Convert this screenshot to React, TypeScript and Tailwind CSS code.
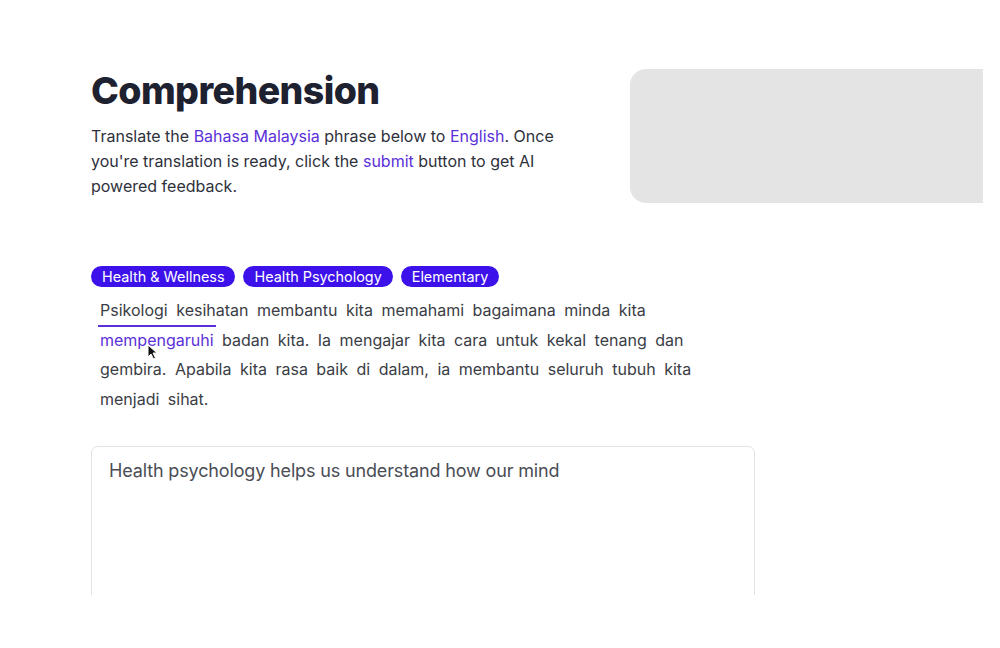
import React from "react";

const passage1 = ["Psikologi", "kesihatan", "membantu", "kita", "memahami", "bagaimana", "minda", "kita"];
const passage2 = ["badan", "kita.", "Ia", "mengajar", "kita", "cara", "untuk", "kekal", "tenang", "dan", "gembira.", "Apabila", "kita", "rasa", "baik", "di", "dalam,", "ia", "membantu", "seluruh", "tubuh", "kita", "menjadi", "sihat."];

function Word({ w, active }: { w: string; active?: boolean }) {
  return (
    <span
      className={
        active
          ? "px-[2px] pt-[3px] border-t-2 border-[#5b30d9] text-[#5b30d9]"
          : "px-[2px] pt-[3px] border-t-2 border-transparent"
      }
    >
      {w}
    </span>
  );
}

export default function App() {
  return (
    <div className="w-[1000px] h-[648px] bg-white" style={{ fontFamily: "Inter, 'Noto Sans', sans-serif" }}>
      <div className="relative w-[983px] h-[595px] overflow-hidden bg-white">
        <div className="flex pt-[69px] pl-[91px]">
          <div className="w-[480px] shrink-0">
            <h1 className="text-[37.5px] leading-[44px] font-extrabold tracking-[-0.6px] text-[#1e2130]">Comprehension</h1>
            <p className="mt-[11px] text-[16px] leading-[25px] text-[#2e313b]">
              Translate the <span className="text-[#5b30d9]">Bahasa Malaysia</span> phrase below to{" "}
              <span className="text-[#5b30d9]">English</span>. Once you're translation is ready, click the{" "}
              <span className="text-[#5b30d9]">submit</span> button to get AI powered feedback.
            </p>
          </div>
          <div className="ml-[59px] w-[420px] h-[134px] shrink-0 rounded-[16px] bg-[#e4e4e4]" />
        </div>

        <div className="pl-[91px] mt-[63px]">
          <div className="flex gap-[8px]">
            {["Health & Wellness", "Health Psychology", "Elementary"].map((t) => (
              <span
                key={t}
                className="h-[21px] flex items-center px-[11px] rounded-full bg-[#3d12ea] text-white text-[14.4px]"
              >
                {t}
              </span>
            ))}
          </div>

          <div className="relative mt-[9px] w-[612px] pl-[7px] text-[16px] leading-[29.6px] text-[#3a3d45]">
            {passage1.map((w, i) => (
              <React.Fragment key={"a" + i}>
                <Word w={w} />{" "}
              </React.Fragment>
            ))}
            <Word w="mempengaruhi" active />{" "}
            {passage2.map((w, i) => (
              <React.Fragment key={"b" + i}>
                <Word w={w} />{" "}
              </React.Fragment>
            ))}
          </div>

          <div className="mt-[32px] w-[664px] h-[200px] rounded-[7px] border border-[#e3e3e3] px-[17px] pt-[10px]">
            <div className="text-[18px] leading-[28px] text-[#4a4d55] tracking-[-0.15px]">
              Health psychology helps us understand how our mind
            </div>
          </div>
        </div>

        <svg className="absolute left-[147px] top-[344px]" width="11" height="16" viewBox="0 0 11 16">
          <path d="M1 1 L1 13 L4 10 L6.5 15 L8.5 14 L6 9 L10 9 Z" fill="#111" stroke="#fff" strokeWidth="1" strokeLinejoin="round" />
        </svg>
      </div>
    </div>
  );
}
